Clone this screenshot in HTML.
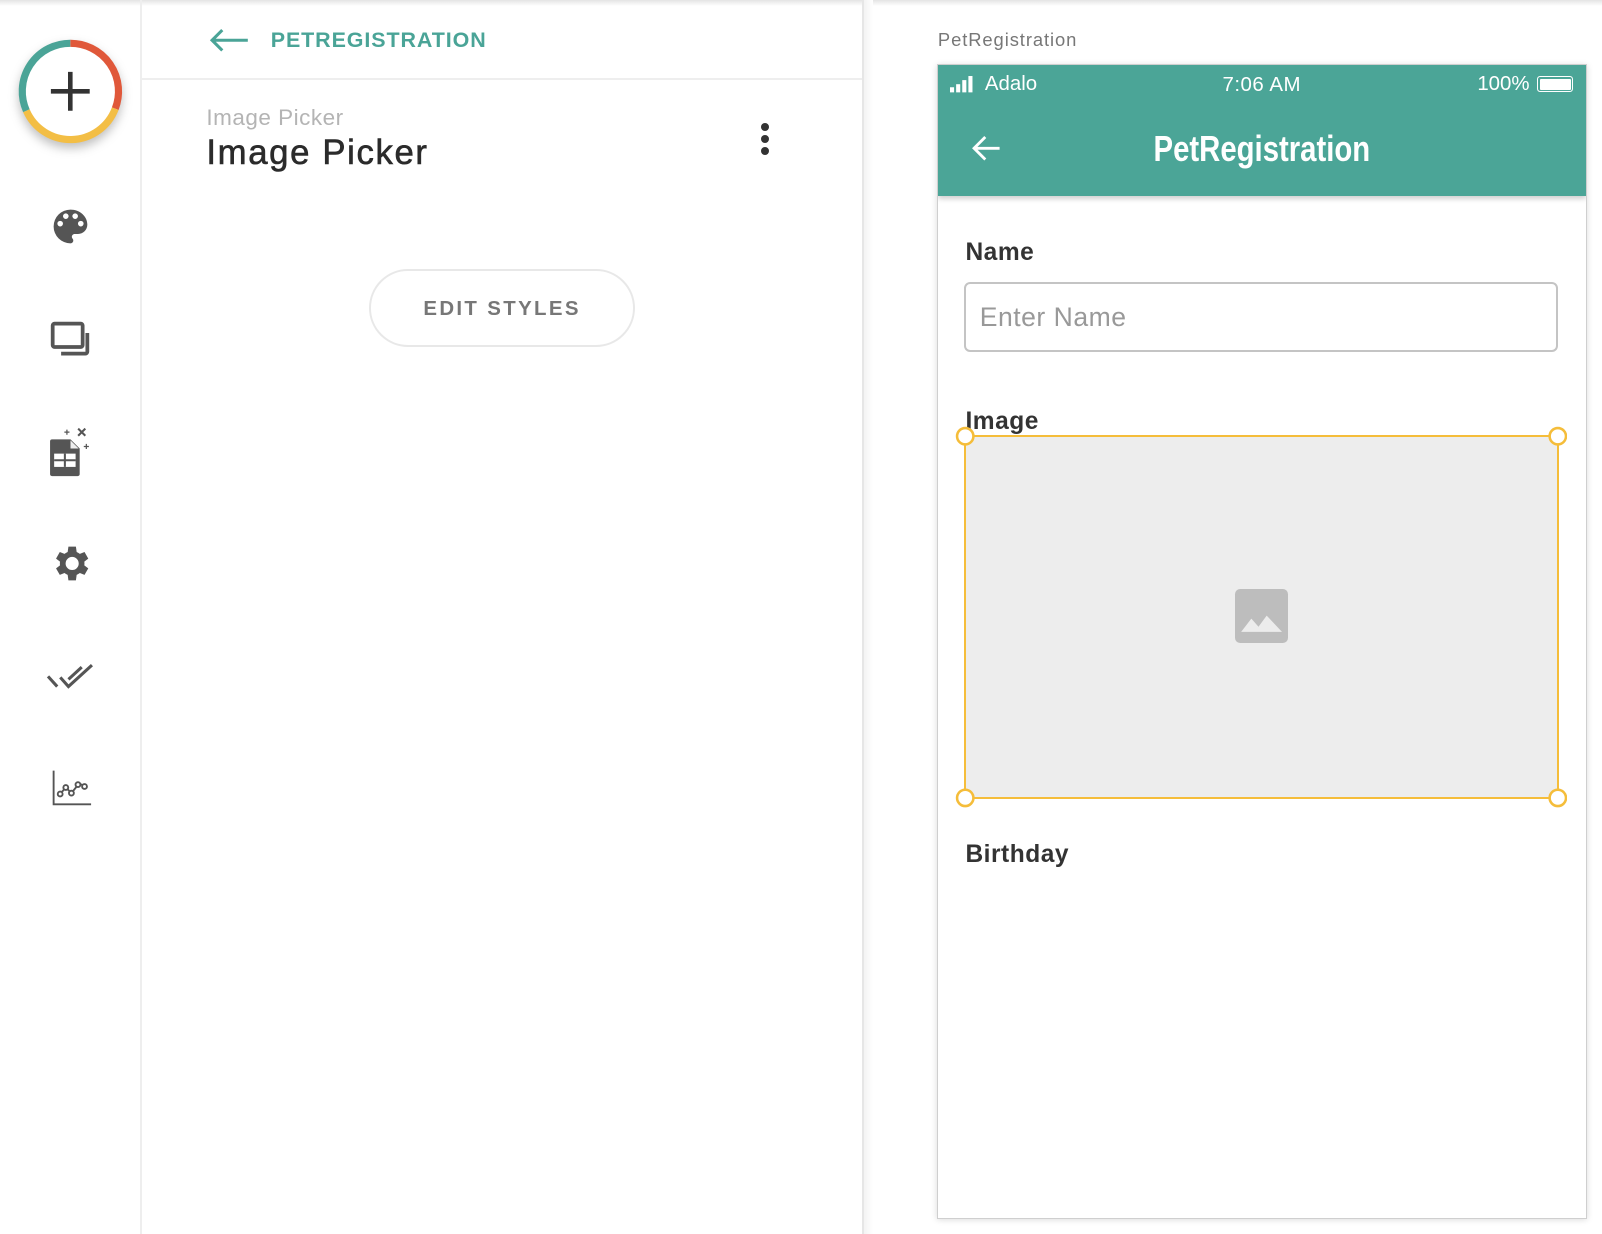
<!DOCTYPE html>
<html><head><meta charset="utf-8"><style>
html{zoom:1.02168}
body{margin:0;width:1568px;height:1208px;position:relative;overflow:hidden;background:#fff;font-family:"Liberation Sans",sans-serif}
.a{position:absolute}
.ico{position:absolute;left:47px;width:44px;height:44px}
</style></head><body>
<div class="a" style="left:0;top:0;width:1568px;height:6px;background:linear-gradient(#e4e4e4,#fff)"></div>
<div class="a" style="left:137px;top:0;width:2px;height:1208px;background:#eee"></div>
<!-- FAB -->
<svg class="a" style="left:9px;top:29px;filter:drop-shadow(0 5px 5px rgba(0,0,0,.25))" width="120" height="120" viewBox="0 0 120 120">
<circle cx="60" cy="60" r="50" fill="#fff"/>
<path d="M60 13 A47 47 0 0 1 104 77" fill="none" stroke="#e0583a" stroke-width="7"/>
<path d="M104 77 A47 47 0 0 1 17 79" fill="none" stroke="#f3be45" stroke-width="7"/>
<path d="M17 79 A47 47 0 0 1 60 13" fill="none" stroke="#4aa497" stroke-width="7"/>
<path d="M60 41V79M41 60H79" stroke="#333" stroke-width="4.5"/>
</svg>
<!-- palette -->
<svg class="ico" style="top:200px" viewBox="0 0 24 24"><path fill="#555" d="M12 3a9 9 0 0 0 0 18c.83 0 1.5-.67 1.5-1.5 0-.39-.15-.74-.39-1.01-.23-.26-.38-.61-.38-.99 0-.83.67-1.5 1.5-1.5H16c2.76 0 5-2.24 5-5 0-4.42-4.030-8-9-8zm-5.5 9a1.5 1.5 0 1 1 0-3 1.5 1.5 0 0 1 0 3zm3-4a1.5 1.5 0 1 1 0-3 1.5 1.5 0 0 1 0 3zm5 0a1.5 1.5 0 1 1 0-3 1.5 1.5 0 0 1 0 3zm3 4a1.5 1.5 0 1 1 0-3 1.5 1.5 0 0 1 0 3z"/></svg>
<!-- screens -->
<svg class="ico" style="top:311px" viewBox="0 0 24 24"><rect x="2.5" y="3" width="16" height="12.5" rx="1" fill="none" stroke="#555" stroke-width="2"/><path d="M21 8v10a1 1 0 0 1-1 1H7" fill="none" stroke="#555" stroke-width="2"/></svg>
<!-- sheet + double check, absolute pixel coords -->
<svg class="a" style="left:0;top:0" width="138" height="1208">
 <path fill="#555" d="M49 432a2 2 0 0 1 2-2h18l9 9v25a2 2 0 0 1-2 2H51a2 2 0 0 1-2-2z"/>
 <path fill="#fff" d="M69 431v8h8z" opacity=".9"/>
 <rect x="53" y="444" width="21" height="13" fill="#fff"/>
 <path d="M53 450.5h21M63.5 444v13" stroke="#555" stroke-width="2"/>
 <path d="M76.5 419.5l7 7M83.5 419.5l-7 7" stroke="#555" stroke-width="2"/>
 <path d="M63 423h5M65.5 420.5v5M82 437h5M84.5 434.5v5" stroke="#555" stroke-width="1.2"/>
 <path d="M47 662l9 10M59 663l8 9 23-21M67 665l13-12" fill="none" stroke="#555" stroke-width="3"/>
</svg>
<!-- gear -->
<svg class="ico" style="top:530px" viewBox="0 0 24 24"><path fill="#555" d="M19.4 13a7.5 7.5 0 0 0 0-2l2.1-1.6-2-3.5-2.5 1a7.3 7.3 0 0 0-1.7-1L14.9 3h-4l-.4 2.9a7.3 7.3 0 0 0-1.7 1l-2.5-1-2 3.5L6.4 11a7.5 7.5 0 0 0 0 2l-2.1 1.6 2 3.5 2.5-1c.5.4 1.1.7 1.700 1l.4 2.9h4l.4-2.9c.6-.3 1.2-.6 1.7-1l2.5 1 2-3.5zM12.9 15.5a3.5 3.5 0 1 1 0-7 3.5 3.5 0 0 1 0 7z"/></svg>
<!-- chart -->
<svg class="ico" style="top:749px" viewBox="0 0 24 24"><path d="M3 3v18h20" fill="none" stroke="#555" stroke-width="1"/><path d="M6 16l3.5-4 3 3 4-5 3 1" fill="none" stroke="#555" stroke-width="1"/><g fill="#fff" stroke="#555" stroke-width="1"><circle cx="6.5" cy="15.5" r="1.3"/><circle cx="9.5" cy="12" r="1.3"/><circle cx="12.5" cy="15" r="1.3"/><circle cx="16" cy="10.5" r="1.3"/><circle cx="19.5" cy="11.5" r="1.3"/></g></svg>

<!-- main panel -->
<div class="a" style="left:139px;top:76px;width:706px;height:2px;background:#eee"></div>
<svg class="a" style="left:205px;top:27px" width="40" height="24" viewBox="0 0 40 24"><path d="M3 12H38M13 2L3 12l10 10" fill="none" stroke="#4aa497" stroke-width="3"/></svg>
<div class="a" style="left:265px;top:27px;font-size:21px;color:#4aa497;font-weight:bold;letter-spacing:.9px">PETREGISTRATION</div>
<div class="a" style="left:202px;top:103px;font-size:22px;color:#b4b4b4;letter-spacing:.5px">Image Picker</div>
<div class="a" style="left:202px;top:131px;font-size:34px;color:#2b2b2b;letter-spacing:1.6px;-webkit-text-stroke:.6px #2b2b2b">Image Picker</div>
<div class="a" style="left:745px;top:120px;width:8px;height:8px;border-radius:50%;background:#333"></div>
<div class="a" style="left:745px;top:132px;width:8px;height:8px;border-radius:50%;background:#333"></div>
<div class="a" style="left:745px;top:144px;width:8px;height:8px;border-radius:50%;background:#333"></div>
<div class="a" style="left:361px;top:263px;width:257px;height:73px;border:2px solid #e8e8e8;border-radius:40px;text-align:center;line-height:75px;font-size:20px;color:#777;font-weight:bold;letter-spacing:2.3px">EDIT STYLES</div>
<div class="a" style="left:844px;top:0;width:2px;height:1208px;background:#e6e6e6"></div>
<div class="a" style="left:846px;top:0;width:8px;height:1208px;background:linear-gradient(90deg,#f3f3f3,#fff)"></div>

<!-- right -->
<div class="a" style="left:918px;top:28px;font-size:18px;color:#777;letter-spacing:.9px">PetRegistration</div>
<div class="a" style="left:917px;top:63px;width:634px;height:1128px;border:1px solid #cfcfcf;box-shadow:0 1px 6px rgba(0,0,0,.15);background:#fff;overflow:hidden">
 <div class="a" style="left:0;top:0;width:634px;height:128px;background:#4ba597;box-shadow:0 3px 5px rgba(0,0,0,.2)"></div>
 <svg class="a" style="left:12px;top:9px" width="26" height="18"><rect x="0" y="12" width="4" height="5" fill="#fff"/><rect x="6" y="9" width="4" height="8" fill="#fff"/><rect x="12" y="5" width="4" height="12" fill="#fff"/><rect x="18" y="1" width="4" height="16" fill="#fff"/></svg>
 <div class="a" style="left:46px;top:7px;font-size:20px;color:#fff">Adalo</div>
 <div class="a" style="left:0;width:634px;text-align:center;top:8px;font-size:20px;color:#fff;letter-spacing:.5px">7:06 AM</div>
 <div class="a" style="left:528px;top:7px;font-size:20px;color:#fff">100%</div>
 <div class="a" style="left:586px;top:10px;width:34px;height:14px;border:1.5px solid #fff;border-radius:3px"></div>
 <div class="a" style="left:589px;top:13px;width:31px;height:11px;background:#fff;border-radius:1px"></div>
 <svg class="a" style="left:32px;top:68px" width="30" height="26" viewBox="0 0 30 26"><path d="M28 13H3M14 2L3 13l11 11" fill="none" stroke="#fff" stroke-width="2.8"/></svg>
 <div class="a" style="left:0;width:634px;text-align:center;top:62px;font-family:'Liberation Sans Narrow','Liberation Sans',sans-serif;font-weight:bold;font-size:35px;color:#fff;transform:scaleX(.82)">PetRegistration</div>
 <div class="a" style="left:27px;top:170px;font-size:24px;font-weight:bold;color:#333;letter-spacing:.5px">Name</div>
 <div class="a" style="left:26px;top:212px;width:577px;height:65px;border:2px solid #c4c4c4;border-radius:6px"></div>
 <div class="a" style="left:41px;top:232px;font-size:26px;color:#999;letter-spacing:.5px">Enter Name</div>
 <div class="a" style="left:27px;top:335px;font-size:24px;font-weight:bold;color:#333;letter-spacing:.5px">Image</div>
 <div class="a" style="left:26px;top:362px;width:578px;height:352px;background:#ededed;border:2px solid #f5bd3a"></div>
 <div class="a" style="left:291px;top:513px;width:52px;height:52px;border-radius:5px;background:#bdbdbd"></div>
 <svg class="a" style="left:291px;top:513px" width="52" height="52"><path d="M6 42l10-13 7 8 8-11 15 16z" fill="#ececec"/></svg>
 <svg class="a" style="left:16px;top:352px" width="600" height="375"><g fill="#fff" stroke="#f5bd3a" stroke-width="2.5"><circle cx="11" cy="11" r="8"/><circle cx="591" cy="11" r="8"/><circle cx="11" cy="365" r="8"/><circle cx="591" cy="365" r="8"/></g></svg>
 <div class="a" style="left:27px;top:759px;font-size:24px;font-weight:bold;color:#333;letter-spacing:.5px">Birthday</div>
</div>
</body></html>
